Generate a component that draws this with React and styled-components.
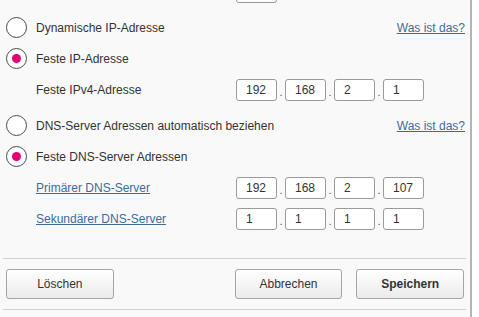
import React from "react";
import styled, { createGlobalStyle } from "styled-components";

const GlobalStyle = createGlobalStyle`
  html, body {
    margin: 0;
    padding: 0;
    background: #ffffff;
  }
  body {
    font-family: "Liberation Sans", Arial, sans-serif;
    font-size: 12px;
    color: #333333;
  }
`;

const Panel = styled.section`
  width: 472px;
  height: 317px;
  box-sizing: border-box;
  background: #f9f9f9;
  border-right: 2px solid #b4b4b4;
  padding: 0 6px 0 6px;
  overflow: hidden;
`;

const StubRow = styled.div`
  display: flex;
  padding-left: 230px;
  height: 12px;
`;

const StubBox = styled.div`
  width: 41px;
  height: 22px;
  margin-top: -19px;
  box-sizing: border-box;
  border: 1px solid #9a9a9a;
  border-radius: 3px;
  background: #fff;
`;

const Row = styled.div`
  display: flex;
  align-items: center;
  height: 31px;
  margin-top: ${(p) => (p.$gap ? p.$gap : 0)}px;
`;

const RadioCircle = styled.span`
  width: 21px;
  height: 21px;
  box-sizing: border-box;
  border: 1px solid #4a4a4a;
  border-radius: 50%;
  background: #fff;
  display: flex;
  align-items: center;
  justify-content: center;
  flex-shrink: 0;
  &::after {
    content: "";
    width: 9px;
    height: 9px;
    border-radius: 50%;
    background: ${(p) => (p.$checked ? "#e20074" : "transparent")};
  }
`;

const RadioLabel = styled.span`
  margin-left: 9px;
  flex: 1;
`;

const HelpLink = styled.a`
  color: #3a6e99;
  text-decoration: underline;
  cursor: pointer;
  margin-right: -1px;
`;

const FieldLabel = styled.span`
  width: 200px;
  margin-left: 30px;
`;

const FieldLink = styled(HelpLink)`
  width: 200px;
  margin-left: 30px;
  margin-right: 0;
`;

const IpGroup = styled.div`
  display: flex;
  align-items: center;
`;

const Octet = styled.div`
  width: 41px;
  height: 22px;
  box-sizing: border-box;
  border: 1px solid #9a9a9a;
  border-radius: 3px;
  background: #fff;
  padding-left: 9px;
  display: flex;
  align-items: center;
  font-size: 12px;
  color: #333;
`;

const Dot = styled.span`
  width: 8px;
  text-align: center;
  align-self: flex-end;
  font-size: 11px;
  line-height: 18px;
  color: #555;
`;

const Divider = styled.div`
  height: 1px;
  background: #d2d2d2;
  margin: ${(p) => p.$top}px 0 0 -3px;
  width: 463px;
`;

const ButtonBar = styled.div`
  display: flex;
  align-items: center;
  padding: 10px 0 10px 0;
`;

const Button = styled.button`
  width: 108px;
  height: 30px;
  box-sizing: border-box;
  border: 1px solid #a5a5a5;
  border-radius: 3px;
  background: linear-gradient(#ffffff, #ebebeb);
  font-family: "Liberation Sans", Arial, sans-serif;
  font-size: 12px;
  font-weight: ${(p) => (p.$primary ? "bold" : "normal")};
  color: #333;
  padding: 0;
  margin-left: ${(p) => p.$left || 0}px;
`;

const IpInput = ({ parts }) => (
  <IpGroup>
    {parts.map((v, i) => (
      <React.Fragment key={i}>
        {i > 0 && <Dot>.</Dot>}
        <Octet>{v}</Octet>
      </React.Fragment>
    ))}
  </IpGroup>
);

const App = () => {
  return (
    <>
      <GlobalStyle />
      <Panel>
        <StubRow>
          <StubBox />
        </StubRow>
        <Row>
          <RadioCircle />
          <RadioLabel>Dynamische IP-Adresse</RadioLabel>
          <HelpLink>Was ist das?</HelpLink>
        </Row>
        <Row>
          <RadioCircle $checked />
          <RadioLabel>Feste IP-Adresse</RadioLabel>
        </Row>
        <Row>
          <FieldLabel>Feste IPv4-Adresse</FieldLabel>
          <IpInput parts={["192", "168", "2", "1"]} />
        </Row>
        <Row $gap={5}>
          <RadioCircle />
          <RadioLabel>DNS-Server Adressen automatisch beziehen</RadioLabel>
          <HelpLink>Was ist das?</HelpLink>
        </Row>
        <Row>
          <RadioCircle $checked />
          <RadioLabel>Feste DNS-Server Adressen</RadioLabel>
        </Row>
        <Row>
          <FieldLink>Primärer DNS-Server</FieldLink>
          <IpInput parts={["192", "168", "2", "107"]} />
        </Row>
        <Row>
          <FieldLink>Sekundärer DNS-Server</FieldLink>
          <IpInput parts={["1", "1", "1", "1"]} />
        </Row>
        <Divider $top={24} />
        <ButtonBar>
          <Button>Löschen</Button>
          <Button $left={121}>Abbrechen</Button>
          <Button $left={14} $primary>
            Speichern
          </Button>
        </ButtonBar>
        <Divider $top={0} />
      </Panel>
    </>
  );
};

export default App;
